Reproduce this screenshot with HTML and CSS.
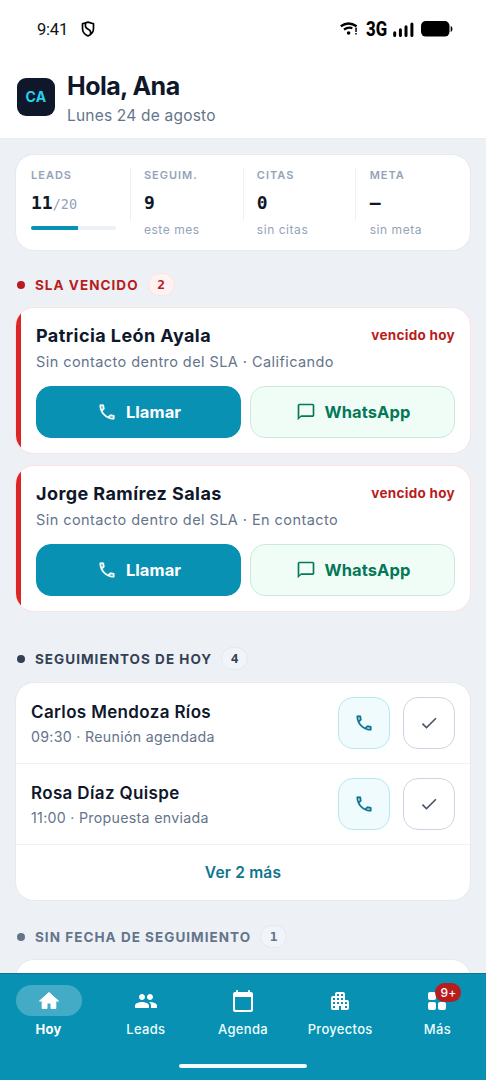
FILE: index.html
```html
<!DOCTYPE html>
<html lang="es">
<head>
<meta charset="utf-8">
<meta name="viewport" content="width=device-width, initial-scale=1">
<title>Hoy</title>
<link rel="stylesheet" href="styles.css">
</head>
<body>
<svg class="defs" aria-hidden="true">
  <symbol id="i-call" viewBox="0 0 24 24"><path d="M6.54 5c.06.89.21 1.76.45 2.59l-1.2 1.2c-.41-1.2-.67-2.47-.76-3.79h1.51m9.86 12.02c.85.24 1.72.39 2.6.45v1.49c-1.32-.09-2.59-.35-3.8-.75l1.2-1.19M7.5 3H4c-.55 0-1 .45-1 1 0 9.39 7.61 17 17 17 .55 0 1-.45 1-1v-3.49c0-.55-.45-1-1-1-1.240 0-2.450-.2-3.570-.57-.1-.04-.21-.05-.31-.05-.26 0-.51.1-.71.29l-2.200 2.200c-2.830-1.450-5.150-3.760-6.590-6.590l2.200-2.200c.28-.28.36-.67.25-1.020C8.700 6.450 8.500 5.250 8.500 4c0-.55-.45-1-1-1z" stroke="currentColor" stroke-width=".2"/></symbol>
  <symbol id="i-chat" viewBox="0 0 24 24"><path d="M20 2H4c-1.100 0-2 .9-2 2v18l4-4h14c1.100 0 2-.9 2-2V4c0-1.100-.9-2-2-2zm0 14H6l-2 2V4h16v12z"/></symbol>
  <symbol id="i-check" viewBox="0 0 24 24"><path d="M9 16.170 4.830 12l-1.420 1.410L9 19 21 7l-1.410-1.410z"/></symbol>
</svg>
<div class="phone">
  <header class="top">
    <div class="status">
      <span class="clock">9:41</span>
      <svg class="shield" viewBox="0 0 14 16"><path d="M7 1.100 12.500 2.800V7.600C12.500 11 10.300 13.700 7 15 3.700 13.700 1.500 11 1.500 7.600V2.800Z M4.700 2.200C3.600 5.300 4.800 7 7.200 8.200 9.600 9.500 10.200 11.300 9.300 13.200" fill="none" stroke="#000" stroke-width="1.700" stroke-linejoin="round"/></svg>
      <span class="spacer"></span>
      <svg class="wifi" viewBox="0 0 18 14"><path d="M.8 4.300Q8.500-1.300 16.600 4.300M4 7.500Q7.800 4.900 12.400 6.100" fill="none" stroke="#000" stroke-width="2.300"/><circle cx="8.600" cy="11" r="1.800"/><path d="M15.300 5.500h1.500v4.500h-1.500zM15.300 11h1.500v1.500h-1.500z"/></svg>
      <span class="net">3G</span>
      <svg class="bars" viewBox="0 0 21 15"><path d="M1.700 10.800v2.700M7.400 7.800v5.700M13 4.800v8.700M18.900 2v11.500" stroke="#000" stroke-width="3" stroke-linecap="round"/></svg>
      <svg class="battery" viewBox="0 0 32 16"><rect width="28.500" height="15.600" rx="4.800"/><path d="M29.700 5q1.800.5 1.800 3t-1.800 3z"/></svg>
    </div>
    <div class="greeting">
      <div class="avatar">CA</div>
      <div class="hello">
        <h1 class="title">Hola, Ana</h1>
        <p class="date">Lunes 24 de agosto</p>
      </div>
    </div>
  </header>

  <main class="content">
    <section class="card kpis">
      <div class="kpi"><span class="kpi-label">LEADS</span><span class="kpi-value">11<small class="kpi-total">/20</small></span><div class="progress"><div class="progress-fill" style="width:55%"></div></div></div>
      <i class="divider"></i>
      <div class="kpi"><span class="kpi-label">SEGUIM.</span><span class="kpi-value">9</span><span class="kpi-note">este mes</span></div>
      <i class="divider"></i>
      <div class="kpi"><span class="kpi-label">CITAS</span><span class="kpi-value">0</span><span class="kpi-note">sin citas</span></div>
      <i class="divider"></i>
      <div class="kpi"><span class="kpi-label">META</span><span class="kpi-value">–</span><span class="kpi-note">sin meta</span></div>
    </section>

    <h2 class="heading danger"><i class="dot"></i><span>SLA VENCIDO</span><b class="count">2</b></h2>
    <article class="card alert">
      <div class="alert-head"><h3 class="name">Patricia León Ayala</h3><span class="due">vencido hoy</span></div>
      <p class="detail">Sin contacto dentro del SLA · Calificando</p>
      <div class="actions">
        <button class="btn call"><svg class="icon"><use href="#i-call"/></svg>Llamar</button>
        <button class="btn chat"><svg class="icon"><use href="#i-chat"/></svg>WhatsApp</button>
      </div>
    </article>
    <article class="card alert">
      <div class="alert-head"><h3 class="name">Jorge Ramírez Salas</h3><span class="due">vencido hoy</span></div>
      <p class="detail">Sin contacto dentro del SLA · En contacto</p>
      <div class="actions">
        <button class="btn call"><svg class="icon"><use href="#i-call"/></svg>Llamar</button>
        <button class="btn chat"><svg class="icon"><use href="#i-chat"/></svg>WhatsApp</button>
      </div>
    </article>

    <h2 class="heading today"><i class="dot"></i><span>SEGUIMIENTOS DE HOY</span><b class="count">4</b></h2>
    <section class="card list">
      <div class="row">
        <div class="person"><h3 class="person-name">Carlos Mendoza Ríos</h3><p class="detail">09:30 · Reunión agendada</p></div>
        <button class="square tint"><svg class="icon"><use href="#i-call"/></svg></button>
        <button class="square"><svg class="icon"><use href="#i-check"/></svg></button>
      </div>
      <div class="row">
        <div class="person"><h3 class="person-name">Rosa Díaz Quispe</h3><p class="detail">11:00 · Propuesta enviada</p></div>
        <button class="square tint"><svg class="icon"><use href="#i-call"/></svg></button>
        <button class="square"><svg class="icon"><use href="#i-check"/></svg></button>
      </div>
      <a class="more">Ver 2 más</a>
    </section>

    <h2 class="heading undated"><i class="dot"></i><span>SIN FECHA DE SEGUIMIENTO</span><b class="count">1</b></h2>
    <section class="card peek"></section>
  </main>

  <nav class="nav">
    <div class="tabs">
      <a class="tab active"><span class="pill"><svg class="nav-icon" viewBox="0 0 24 24"><path d="M10 19.500v-5.500h4v5.500h4.800v-7.500h2.700L12 3.500 2.500 12h2.700v7.500z" stroke="#fff" stroke-width="1" stroke-linejoin="round"/></svg></span>Hoy</a>
      <a class="tab"><span class="pill"><svg class="nav-icon" viewBox="0 0 24 24"><path d="M16 11c1.660 0 2.990-1.340 2.990-3S17.660 5 16 5s-3 1.340-3 3 1.340 3 3 3zm-8 0c1.660 0 2.990-1.340 2.990-3S9.660 5 8 5 5 6.340 5 8s1.340 3 3 3zm0 2c-2.330 0-7 1.170-7 3.500V18c0 .55.45 1 1 1h12c.55 0 1-.45 1-1v-1.500c0-2.330-4.670-3.500-7-3.500zm8 0c-.29 0-.62.020-.97.050 1.160.840 1.970 1.970 1.970 3.450V18c0 .35-.07.690-.18 1H22c.55 0 1-.45 1-1v-1.500c0-2.330-4.670-3.500-7-3.500z"/></svg></span>Leads</a>
      <a class="tab"><span class="pill"><svg class="nav-icon" viewBox="0 0 24 24"><path d="M20 3h-1V2c0-.55-.45-1-1-1s-1 .45-1 1v1H7V2c0-.55-.45-1-1-1s-1 .45-1 1v1H4c-1.100 0-2 .9-2 2v16c0 1.100.9 2 2 2h16c1.100 0 2-.9 2-2V5c0-1.100-.9-2-2-2zm-1 18H5c-.55 0-1-.45-1-1V8h16v12c0 .55-.45 1-1 1z"/></svg></span>Agenda</a>
      <a class="tab"><span class="pill"><svg class="nav-icon" viewBox="0 0 24 24"><path d="M17 11V5c0-1.100-.9-2-2-2H9c-1.100 0-2 .9-2 2v2H5c-1.100 0-2 .9-2 2v10c0 1.100.9 2 2 2h6v-4h2v4h6c1.100 0 2-.9 2-2v-6c0-1.100-.9-2-2-2h-2zM7 19H5v-2h2v2zm0-4H5v-2h2v2zm0-4H5V9h2v2zm4 4H9v-2h2v2zm0-4H9V9h2v2zm0-4H9V5h2v2zm4 8h-2v-2h2v2zm0-4h-2V9h2v2zm0-4h-2V5h2v2zm4 12h-2v-2h2v2zm0-4h-2v-2h2v2z"/></svg></span>Proyectos</a>
      <a class="tab"><span class="pill"><svg class="nav-icon" viewBox="0 0 24 24"><path d="M5 3h4q2 0 2 2v4q0 2-2 2H5q-2 0-2-2V5q0-2 2-2zM15 3h4q2 0 2 2v4q0 2-2 2h-4q-2 0-2-2V5q0-2 2-2zM5 13h4q2 0 2 2v4q0 2-2 2H5q-2 0-2-2v-4q0-2 2-2zM15 13h4q2 0 2 2v4q0 2-2 2h-4q-2 0-2-2v-4q0-2 2-2z"/></svg><b class="badge">9+</b></span>Más</a>
    </div>
    <i class="home-bar"></i>
  </nav>
</div>
</body>
</html>
```

FILE: styles.css
```css
* { box-sizing: border-box; margin: 0; padding: 0; }
body { font-family: Inter, "Liberation Sans", sans-serif; background: #edf1f6; }
i { font-style: normal; }
button { font: inherit; }
.defs { display: none; }
.phone { width: 486px; height: 1080px; display: flex; flex-direction: column; overflow: hidden; }
.icon { width: 20px; height: 20px; fill: currentColor; flex: none; }

.top { height: 139px; flex: none; background: #fff; border-bottom: 1px solid #e8edf3; }
.status { height: 58px; display: flex; align-items: center; padding: 0 33px 0 37px; }
.clock { font-family: Roboto, sans-serif; font-size: 16.500px; letter-spacing: -.2px; color: #111; width: 44px; }
.shield { width: 14px; height: 16px; }
.spacer { flex: 1; }
.wifi { width: 18px; height: 14px; margin-right: 8px; }
.net { font-family: Roboto, sans-serif; font-weight: 800; font-size: 19.500px; width: 27px; transform: scaleX(.86); transform-origin: left; white-space: nowrap; }
.bars { width: 21px; height: 15px; margin-right: 7px; }
.battery { width: 32px; height: 16px; }
.greeting { display: flex; align-items: flex-start; gap: 12px; padding: 11px 17px 0; }
.avatar { width: 38px; height: 38px; margin-top: 9px; border-radius: 9px; background: #0f172a; color: #22d3ee; font-size: 14px; font-weight: 700; line-height: 38px; text-align: center; letter-spacing: .3px; }
.title { font-size: 25px; line-height: 34px; font-weight: 700; letter-spacing: -.55px; color: #0f172a; }
.date { font-size: 15.500px; line-height: 24px; letter-spacing: .2px; color: #64748b; margin-top: 1px; }

.content { flex: 1; min-height: 0; overflow: hidden; padding: 15px 15px 0; }
.card { background: #fff; border: 1px solid #e5eaf0; border-radius: 19px; }
.kpis { display: flex; height: 97px; padding: 13px 15px 0 15px; }
.kpi { flex: 1 1 0; min-width: 0; display: flex; flex-direction: column; white-space: nowrap; }
.divider { width: 1px; height: 53px; background: #edf1f5; margin: 0 13.300px; }
.kpi-label { font-size: 11px; line-height: 15px; font-weight: 600; letter-spacing: 1px; color: #94a3b8; }
.kpi-value { font-family: "DejaVu Sans Mono", monospace; font-size: 18px; line-height: 24px; height: 24px; font-weight: 700; color: #0f172a; margin-top: 8px; }
.kpi-total { font-size: 13.500px; font-weight: 400; color: #94a3b8; }
.kpi-note { font-size: 12px; line-height: 16px; letter-spacing: .55px; color: #94a3b8; margin-top: 7px; }
.progress { height: 4px; margin-top: 11px; border-radius: 2px; background: #edf1f5; overflow: hidden; }
.progress-fill { height: 100%; background: #0891b2; }

.heading { display: flex; align-items: center; height: 23px; padding-left: 2px; font-size: 13.500px; font-weight: 700; letter-spacing: 1.030px; }
.dot { width: 8px; height: 8px; border-radius: 50%; background: currentColor; margin-right: 10px; }
.count { min-width: 27px; height: 23px; margin-left: 9px; border: 1px solid #e2e8f0; border-radius: 12px; background: #f1f5f9; font-family: "DejaVu Sans Mono", monospace; font-size: 13px; line-height: 21px; text-align: center; letter-spacing: 0; }
.danger { color: #b91c1c; margin: 22px 0 11px; }
.danger .count { background: #fef2f2; border-color: #fee2e2; }
.today { color: #334155; margin: 35px 0 12px; }
.undated { color: #64748b; margin: 24px 0 11px; }

.alert { position: relative; height: 147px; overflow: hidden; border-color: #fde2e2; padding: 15px 15px 0 20px; }
.alert::before { content: ""; position: absolute; left: -1px; top: -1px; bottom: -1px; width: 6px; background: #dc2626; }
.alert + .alert { margin-top: 11px; }
.alert-head { display: flex; justify-content: space-between; align-items: center; height: 24px; }
.name { font-size: 18px; font-weight: 700; letter-spacing: .42px; color: #0f172a; }
.due { font-size: 13.500px; font-weight: 700; letter-spacing: .3px; color: #b91c1c; margin-top: -1px; }
.detail { font-size: 14.500px; line-height: 22px; letter-spacing: .43px; color: #64748b; white-space: nowrap; }
.alert .detail { margin-top: 4px; }
.actions { display: grid; grid-template-columns: 1fr 1fr; gap: 9px; margin-top: 13px; }
.btn { height: 52px; border: 1px solid #0891b2; border-radius: 15px; display: flex; align-items: center; justify-content: center; gap: 9px; padding-left: 1px; font-size: 16.500px; font-weight: 700; letter-spacing: .08px; }
.call { background: #0891b2; color: #fff; }
.chat { background: #f0fdf7; border-color: #c9ead8; color: #047857; }

.list { height: 219px; }
.row { display: flex; align-items: center; height: 81px; padding: 0 15px; border-bottom: 1px solid #edf1f5; }
.person { flex: 1; padding-top: 2px; }
.person .detail { font-size: 14.200px; letter-spacing: .3px; }
.person-name { font-size: 17px; line-height: 24px; font-weight: 600; letter-spacing: .35px; color: #0f172a; margin-bottom: 2px; }
.square { width: 52px; height: 52px; border: 1px solid #cbd5e1; border-radius: 15px; background: #fff; color: #475569; display: flex; align-items: center; justify-content: center; margin-left: 13px; }
.tint { background: #f0fbfe; border-color: #b6e8f1; color: #0e7490; }
.more { display: flex; align-items: center; justify-content: center; height: 55px; color: #0e7490; font-size: 15.500px; font-weight: 600; letter-spacing: .2px; }
.peek { height: 80px; }

.nav { height: 107px; flex: none; background: #0891b2; border-top: 1px solid #0e7490; display: flex; flex-direction: column; align-items: center; }
.tabs { width: 100%; height: 91px; display: grid; grid-template-columns: repeat(5, 1fr); padding-top: 11px; }
.tab { display: flex; flex-direction: column; align-items: center; color: #ecfeff; font-size: 13px; font-weight: 500; letter-spacing: .3px; line-height: 18px; }
.active { font-weight: 700; color: #fff; }
.pill { position: relative; width: 66px; height: 31px; border-radius: 16px; display: grid; place-items: center; margin-bottom: 4px; }
.active .pill { background: #43abc5; }
.nav-icon { width: 24px; height: 24px; fill: #fff; }
.badge { position: absolute; left: 31px; top: -2px; width: 26px; height: 19px; border-radius: 10px; background: #b91c1c; color: #fff; font-size: 12px; line-height: 19px; font-weight: 500; text-align: center; letter-spacing: .2px; }
.home-bar { width: 128px; height: 4px; border-radius: 2px; background: #f3fbfc; margin-top: -1px; }
```
